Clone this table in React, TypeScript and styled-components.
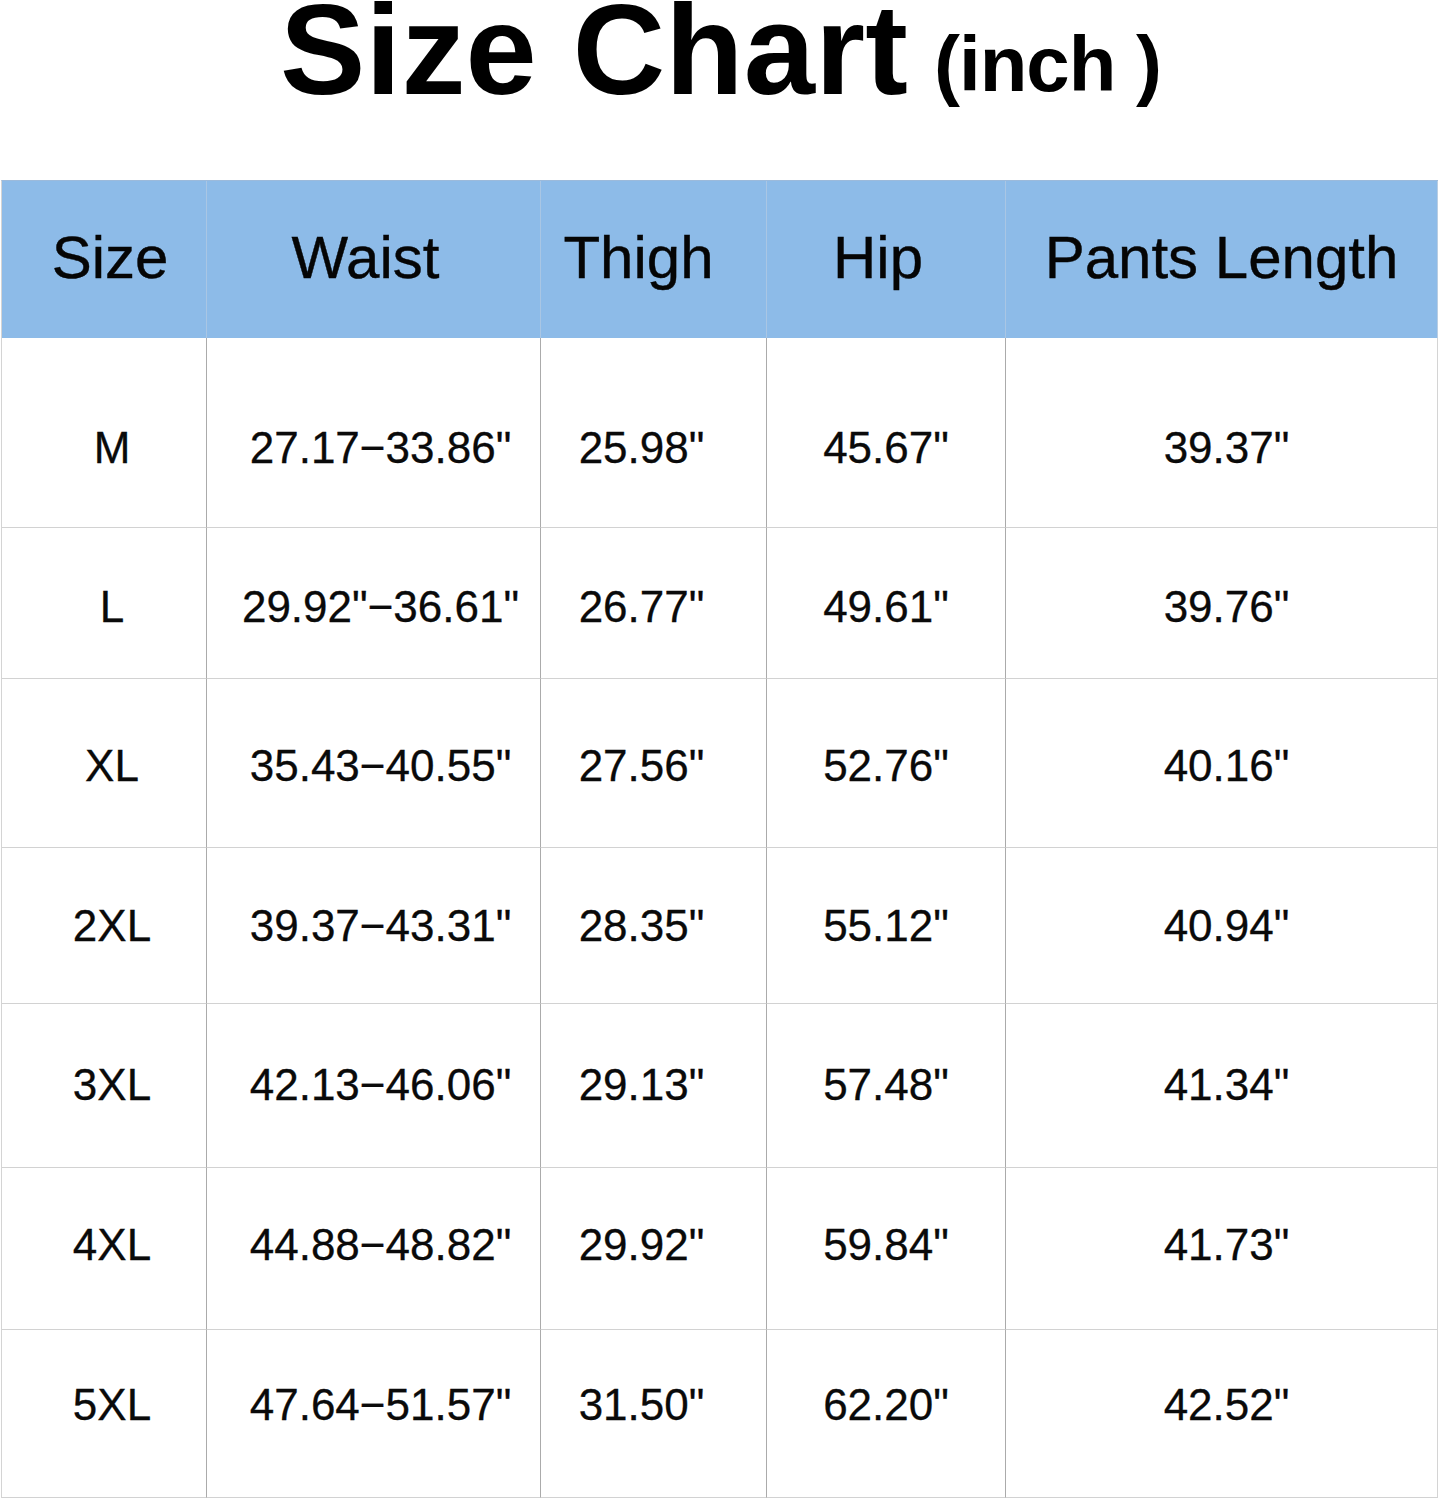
import React from "react";
import styled, { createGlobalStyle } from "styled-components";

const GlobalStyle = createGlobalStyle`
  html, body {
    margin: 0;
    padding: 0;
    background: #ffffff;
  }
  body {
    font-family: "Liberation Sans", Arial, sans-serif;
    color: #000;
  }
`;

const columns = [
  { width: 205, headDx: 6, bodyDx: 8 },
  { width: 334, headDx: -8, bodyDx: 7 },
  { width: 226, headDx: -15, bodyDx: -12 },
  { width: 239, headDx: -8, bodyDx: 0 },
  { width: 432, headDx: 0, bodyDx: 5 },
];

const headers = ["Size", "Waist", "Thigh", "Hip", "Pants Length"];

const rows = [
  { height: 190, dy: 15, cells: ["M", "27.17\u221233.86\"", "25.98\"", "45.67\"", "39.37\""] },
  { height: 151, dy: 4, cells: ["L", "29.92\"\u221236.61\"", "26.77\"", "49.61\"", "39.76\""] },
  { height: 169, dy: 3, cells: ["XL", "35.43\u221240.55\"", "27.56\"", "52.76\"", "40.16\""] },
  { height: 156, dy: 0, cells: ["2XL", "39.37\u221243.31\"", "28.35\"", "55.12\"", "40.94\""] },
  { height: 164, dy: -1, cells: ["3XL", "42.13\u221246.06\"", "29.13\"", "57.48\"", "41.34\""] },
  { height: 162, dy: -4, cells: ["4XL", "44.88\u221248.82\"", "29.92\"", "59.84\"", "41.73\""] },
  { height: 168, dy: -9, cells: ["5XL", "47.64\u221251.57\"", "31.50\"", "62.20\"", "42.52\""] },
];

const Page = styled.div`
  width: 1441px;
`;

const TitleBar = styled.h1`
  margin: 0;
  height: 180px;
  box-sizing: border-box;
  display: flex;
  justify-content: center;
  align-items: baseline;
  font-weight: 700;
  line-height: 100px;
`;

const TitleMain = styled.span`
  font-size: 128px;
  letter-spacing: 0.2px;
`;

const TitleUnit = styled.span`
  font-size: 78px;
  letter-spacing: -1px;
  margin-left: 26px;
  transform: translateY(-3px);
  display: inline-block;
`;

const Table = styled.div`
  margin-left: 1px;
  display: grid;
  grid-template-columns: ${columns.map((c) => `${c.width}px`).join(" ")};
  width: max-content;
  border-left: 1px solid #d4d4d4;
  border-top: 1px solid #9cbadb;
`;

const shift = (dx: number, dy: number) => `
  padding: ${dy > 0 ? 2 * dy : 0}px ${dx < 0 ? -2 * dx : 0}px ${dy < 0 ? -2 * dy : 0}px ${
  dx > 0 ? 2 * dx : 0
}px;
`;

const HeadCell = styled.div<{ $dx: number; $last: boolean }>`
  height: 157px;
  box-sizing: border-box;
  display: flex;
  align-items: center;
  justify-content: center;
  background: #8dbbe8;
  border-right: 1px solid ${(p) => (p.$last ? "#b9cde2" : "#a9c6e4")};
  font-size: 60px;
  line-height: 1;
  color: #050505;
  -webkit-text-stroke: 0.4px #050505;
  white-space: nowrap;
  ${(p) => shift(p.$dx, -2)}
`;

const Cell = styled.div<{ $dx: number; $dy: number; $h: number; $last: boolean }>`
  height: ${(p) => p.$h}px;
  box-sizing: border-box;
  display: flex;
  align-items: center;
  justify-content: center;
  border-right: 1px solid ${(p) => (p.$last ? "#d4d4d4" : "#ababab")};
  border-bottom: 1px solid #d2d2d2;
  font-size: 44px;
  line-height: 1;
  color: #0a0a0a;
  -webkit-text-stroke: 0.3px #0a0a0a;
  white-space: nowrap;
  ${(p) => shift(p.$dx, p.$dy)}
`;

export default function App() {
  return (
    <Page>
      <GlobalStyle />
      <TitleBar>
        <TitleMain>Size Chart</TitleMain>
        <TitleUnit>(inch )</TitleUnit>
      </TitleBar>
      <Table>
        {headers.map((h, i) => (
          <HeadCell key={h} $dx={columns[i].headDx} $last={i === headers.length - 1}>
            {h}
          </HeadCell>
        ))}
        {rows.map((row, r) =>
          row.cells.map((text, i) => (
            <Cell
              key={`${r}-${i}`}
              $dx={columns[i].bodyDx}
              $dy={row.dy}
              $h={row.height}
              $last={i === row.cells.length - 1}
            >
              {text}
            </Cell>
          ))
        )}
      </Table>
    </Page>
  );
}
